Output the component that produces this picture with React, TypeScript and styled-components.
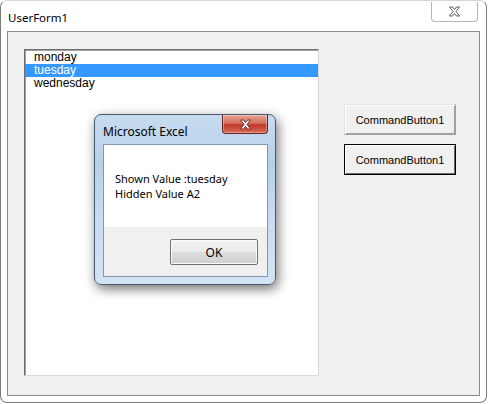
import React, { FC } from 'react';
import styled, { createGlobalStyle } from 'styled-components';

const GlobalStyle = createGlobalStyle`
    html, body {
        margin: 0;
        padding: 0;
        background: #ffffff;
    }
    body {
        font-family: "Noto Sans", "Open Sans", sans-serif;
        color: #000;
    }
`;

const Window = styled.div`
    position: relative;
    box-sizing: border-box;
    width: 487px;
    height: 403px;
    background: #ffffff;
    border: 1px solid #7a7a7a;
    border-top-color: #d6d6d6;
    border-radius: 7px;
    display: flex;
    flex-direction: column;
`;

const TitleBar = styled.div`
    height: 30px;
    display: flex;
    align-items: flex-start;
    justify-content: space-between;
`;

const Title = styled.div`
    font-family: "Noto Sans", sans-serif;
    font-size: 11.5px;
    margin: 9px 0 0 7px;
    color: #000;
`;

const CloseButton = styled.div`
    box-sizing: border-box;
    width: 47px;
    height: 20px;
    margin: 1px 8px 0 0;
    border: 1px solid #b5b5b5;
    border-top: none;
    border-radius: 0 0 4px 4px;
    background: #ffffff;
    display: flex;
    align-items: center;
    justify-content: center;
`;

const Client = styled.div`
    position: relative;
    box-sizing: border-box;
    margin: 0 6px 0 6px;
    height: 365px;
    border: 1px solid #8c8c8c;
    background: #f0f0f0;
    display: flex;
    align-items: flex-start;
    padding: 17px 0 0 16px;
    gap: 25px;
`;

const ListBox = styled.div`
    box-sizing: border-box;
    width: 295px;
    height: 327px;
    background: #ffffff;
    border: 1px solid #d8d8d8;
    border-top-color: #6e6e6e;
    border-left-color: #6e6e6e;
    box-shadow: inset 1px 1px 0 #a0a0a0;
    padding-top: 1px;
    font-family: "Liberation Sans", Arial, sans-serif;
    font-size: 12px;
`;

const ListItem = styled.div<{ $selected?: boolean }>`
    height: 13px;
    line-height: 13px;
    padding-left: 9px;
    background: ${(p) => (p.$selected ? '#3399ff' : 'transparent')};
    color: ${(p) => (p.$selected ? '#ffffff' : '#000000')};
`;

const Buttons = styled.div`
    display: flex;
    flex-direction: column;
    gap: 9px;
    margin-top: 55px;
`;

const CommandButton = styled.div<{ $default?: boolean }>`
    box-sizing: border-box;
    width: 112px;
    height: 31px;
    display: flex;
    align-items: center;
    justify-content: center;
    background: #f0f0f0;
    font-family: "Liberation Sans", Arial, sans-serif;
    font-size: 11px;
    border: 1px solid ${(p) => (p.$default ? '#000000' : '#a0a0a0')};
    box-shadow: ${(p) =>
        p.$default
            ? 'inset 1px 1px 0 #ffffff, inset -1px -1px 0 #696969'
            : 'inset 1px 1px 0 #ffffff, inset -1px -1px 0 #a0a0a0'};
    border-top-color: ${(p) => (p.$default ? '#000000' : '#e3e3e3')};
    border-left-color: ${(p) => (p.$default ? '#000000' : '#e3e3e3')};
`;

const MsgBox = styled.div`
    position: absolute;
    left: 93px;
    top: 113px;
    box-sizing: border-box;
    width: 182px;
    height: 171px;
    border: 1px solid #4a5a6c;
    border-radius: 7px;
    background: linear-gradient(180deg, #c7dbef 0%, #b7d0ea 30%, #c8dcf1 60%, #d2e3f4 100%);
    box-shadow: 2px 4px 12px rgba(0, 0, 0, 0.55);
    display: flex;
    flex-direction: column;
    padding: 0 7px 7px 8px;
`;

const MsgTitleBar = styled.div`
    height: 29px;
    display: flex;
    align-items: flex-start;
    justify-content: space-between;
`;

const MsgTitle = styled.div`
    font-family: "Noto Sans", sans-serif;
    font-size: 12px;
    margin: 8px 0 0 0;
    color: #000;
`;

const RedClose = styled.div`
    box-sizing: border-box;
    width: 46px;
    height: 19px;
    border: 1px solid #6b2020;
    border-top: none;
    border-radius: 0 0 4px 4px;
    background: linear-gradient(180deg, #e8a493 0%, #d3705e 45%, #c0392b 55%, #d86a56 100%);
    box-shadow: inset 0 0 0 1px rgba(255, 255, 255, 0.35);
    display: flex;
    align-items: center;
    justify-content: center;
`;

const MsgInner = styled.div`
    flex: 1;
    display: flex;
    flex-direction: column;
    border: 1px solid #7f97b3;
    background: #f0f0f0;
`;

const MsgContent = styled.div`
    height: 82px;
    background: #ffffff;
    box-sizing: border-box;
    padding: 26px 0 0 11px;
    font-family: "Noto Sans", sans-serif;
    font-size: 11px;
`;

const MsgLine = styled.div`
    height: 15px;
    line-height: 15px;
`;

const MsgFooter = styled.div`
    flex: 1;
    display: flex;
    justify-content: flex-end;
    align-items: flex-start;
    padding: 12px 9px 0 0;
`;

const OkButton = styled.div`
    box-sizing: border-box;
    width: 88px;
    height: 26px;
    display: flex;
    align-items: center;
    justify-content: center;
    font-family: "Noto Sans", sans-serif;
    font-size: 12px;
    border: 1px solid #707070;
    border-radius: 2px;
    background: linear-gradient(180deg, #f2f2f2 0%, #ebebeb 50%, #dddddd 51%, #cfcfcf 100%);
    box-shadow: inset 0 0 0 1px #fcfcfc;
`;

const XIcon: FC<{ color: string; stroke: string }> = ({ color, stroke }) => (
    <svg width="13" height="11" viewBox="0 0 13 11">
        <path
            d="M1.5 1 L4.5 1 L6.5 3.5 L8.5 1 L11.5 1 L8 5.5 L11.5 10 L8.5 10 L6.5 7.5 L4.5 10 L1.5 10 L5 5.5 Z"
            fill={color}
            stroke={stroke}
            strokeWidth="1"
            strokeLinejoin="round"
        />
    </svg>
);

const days = ['monday', 'tuesday', 'wednesday'];

const App: FC = () => (
    <>
        <GlobalStyle />
        <Window>
            <TitleBar>
                <Title>UserForm1</Title>
                <CloseButton>
                    <XIcon color="#ffffff" stroke="#5a5a5a" />
                </CloseButton>
            </TitleBar>
            <Client>
                <ListBox>
                    {days.map((d) => (
                        <ListItem key={d} $selected={d === 'tuesday'}>
                            {d}
                        </ListItem>
                    ))}
                </ListBox>
                <Buttons>
                    <CommandButton>CommandButton1</CommandButton>
                    <CommandButton $default>CommandButton1</CommandButton>
                </Buttons>
            </Client>
            <MsgBox>
                <MsgTitleBar>
                    <MsgTitle>Microsoft Excel</MsgTitle>
                    <RedClose>
                        <XIcon color="#ffffff" stroke="#7a2a20" />
                    </RedClose>
                </MsgTitleBar>
                <MsgInner>
                    <MsgContent>
                        <MsgLine>Shown Value :tuesday</MsgLine>
                        <MsgLine>Hidden Value A2</MsgLine>
                    </MsgContent>
                    <MsgFooter>
                        <OkButton>OK</OkButton>
                    </MsgFooter>
                </MsgInner>
            </MsgBox>
        </Window>
    </>
);

export default App;
